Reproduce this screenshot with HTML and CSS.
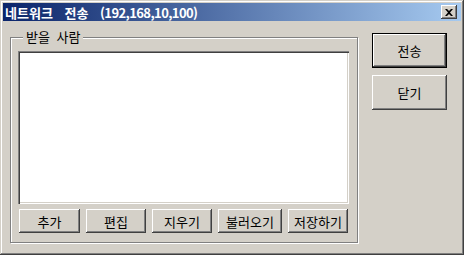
FILE: index.html
```html
<!DOCTYPE html>
<html lang="ko">
<head>
  <meta charset="UTF-8" />
  <title>네트워크 전송</title>
  <link rel="stylesheet" href="styles.css">
</head>
<body>
  <div class="window">
    <div class="titlebar">
      <span class="title">네트워크 전송 <span class="ip">(192,168,10,100)</span></span>
      <button class="close-btn">
        <svg width="8" height="7" viewBox="0 0 8 7"><path d="M0 0h2l2 2 2-2h2L5 3.5 8 7H6L4 5 2 7H0l3-3.5z" fill="#000"/></svg>
      </button>
    </div>
    <div class="content">
      <div class="group">
        <span class="group-label">받을 사람</span>
        <div class="listbox"></div>
        <div class="btn-row">
          <button class="btn w61">추가</button>
          <button class="btn w60">편집</button>
          <button class="btn w60">지우기</button>
          <button class="btn w64">불러오기</button>
          <button class="btn w60">저장하기</button>
        </div>
      </div>
      <div class="side">
        <button class="btn side-btn default">전송</button>
        <button class="btn side-btn">닫기</button>
      </div>
    </div>
  </div>
</body>
</html>
```

FILE: styles.css
```css
body {
  margin: 0;
  background: #d4d0c8;
  font-family: "Noto Sans CJK KR", "DejaVu Sans", sans-serif;
  font-size: 13px;
}

.window {
  width: 464px;
  height: 255px;
  box-sizing: border-box;
  padding: 3px;
  background: #d4d0c8;
  box-shadow: inset -1px -1px #404040, inset 1px 1px #d4d0c8,
    inset -2px -2px #808080, inset 2px 2px #fff;
}

.titlebar {
  height: 18px;
  display: flex;
  align-items: center;
  justify-content: space-between;
  background: linear-gradient(to right, #0a246a, #a6caf0);
  padding: 0 4px 0 2px;
}

.title {
  color: #fff;
  font-weight: bold;
  font-size: 13px;
  word-spacing: 8px;
}

.ip {
  letter-spacing: -0.6px;
}

.close-btn {
  width: 16px;
  height: 14px;
  padding: 0;
  border: none;
  background: #d4d0c8;
  display: flex;
  align-items: center;
  justify-content: center;
  box-shadow: inset -1px -1px #404040, inset 1px 1px #fff,
    inset -2px -2px #808080;
}

.content {
  display: flex;
  padding: 16px 0 0 7px;
}

.group {
  position: relative;
  width: 348px;
  height: 206px;
  box-sizing: border-box;
  border: 1px solid #808080;
  box-shadow: inset 1px 1px #fff, 1px 1px #fff;
  padding: 13px 8px 0 7px;
}

.group-label {
  position: absolute;
  left: 12px;
  top: -9px;
  padding: 0 3px;
  background: #d4d0c8;
  line-height: 16px;
  word-spacing: 3px;
}

.listbox {
  height: 153px;
  background: #fff;
  box-shadow: inset 1px 1px #808080, inset 2px 2px #404040,
    inset -1px -1px #fff, inset -2px -2px #d4d0c8;
}

.btn-row {
  display: flex;
  gap: 6px;
  margin-top: 5px;
  padding-left: 1px;
}

.btn {
  height: 24px;
  padding: 0;
  border: none;
  background: #d4d0c8;
  font-family: "Noto Sans CJK KR", "DejaVu Sans", sans-serif;
  font-size: 13px;
  color: #000;
  box-shadow: inset -1px -1px #404040, inset 1px 1px #fff,
    inset -2px -2px #808080, inset 2px 2px #d4d0c8;
}

.w60 { width: 60px; }
.w61 { width: 61px; }
.w64 { width: 64px; }

.side {
  display: flex;
  flex-direction: column;
  gap: 7px;
  margin-left: 14px;
  margin-top: -4px;
}

.side-btn {
  width: 75px;
  height: 35px;
}

.side-btn.default {
  outline: 1px solid #000;
  outline-offset: -1px;
  box-shadow: inset -2px -2px #404040, inset 2px 2px #fff,
    inset -3px -3px #808080;
}
```
